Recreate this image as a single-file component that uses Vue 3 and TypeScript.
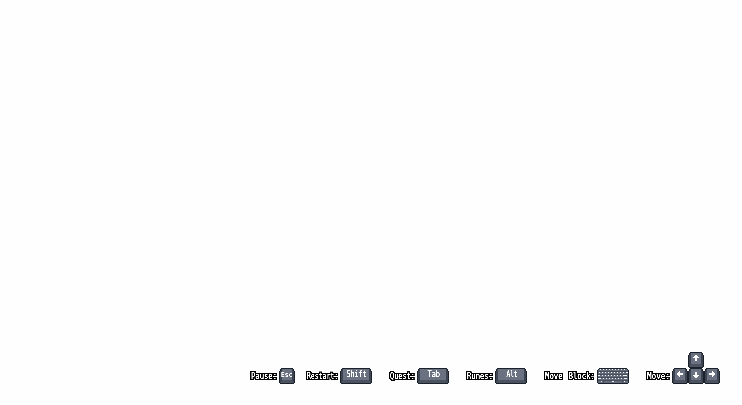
<script setup lang="ts">
interface Hint {
  label: string
  space: number
  key?: string
  wide?: boolean
  keySpan?: number
  keyX?: number
  keyY?: number
  kind: 'key' | 'keyboard' | 'arrows'
}

const hints: Hint[] = [
  { label: 'Pause:', space: 29, key: 'Esc', keySpan: 11.5, keyX: 2, keyY: 9, kind: 'key' },
  { label: 'Restart:', space: 34, key: 'Shift', wide: true, keySpan: 20, keyX: 6.5, keyY: 9, kind: 'key' },
  { label: 'Quest:', space: 28, key: 'Tab', wide: true, keySpan: 12.5, keyX: 10.5, keyY: 9, kind: 'key' },
  { label: 'Runes:', space: 29, key: 'Alt', wide: true, keySpan: 11, keyX: 11.5, keyY: 9, kind: 'key' },
  { label: 'Move Block:', space: 53, kind: 'keyboard' },
  { label: 'Move:', space: 26, kind: 'arrows' },
]

const arrows: { name: string; path: string }[] = [
  { name: 'up', path: 'M7 3h2v1h1v1h1v1H9v3H7V6H5V5h1V4h1z' },
  { name: 'left', path: 'M5 5h1V4h1V3h1v2h3v2H8v2H7V8H6V7H5z' },
  { name: 'down', path: 'M7 4h2v3h2v1h-1v1H9v1H7V9H6V8H5V7h2z' },
  { name: 'right', path: 'M8 3h1v1h1v1h1v2h-1v1H9v1H8V7H5V5h3z' },
]
</script>

<template>
  <main class="screen">
    <svg class="defs" width="0" height="0">
      <filter id="crisp" x="-10%" y="-30%" width="120%" height="160%" color-interpolation-filters="sRGB">
        <feComponentTransfer in="SourceGraphic" result="glyph">
          <feFuncA type="linear" slope="3" intercept="-0.65" />
        </feComponentTransfer>
        <feMorphology in="glyph" operator="dilate" radius="1" result="fat" />
        <feColorMatrix in="fat" type="matrix" values="0 0 0 0 0  0 0 0 0 0  0 0 0 0 0  0 0 0 3 0" result="edge" />
        <feMerge>
          <feMergeNode in="edge" />
          <feMergeNode in="glyph" />
        </feMerge>
      </filter>
      <filter id="sharp" x="-10%" y="-30%" width="120%" height="160%" color-interpolation-filters="sRGB">
        <feComponentTransfer>
          <feFuncA type="linear" slope="2.6" intercept="-0.45" />
        </feComponentTransfer>
      </filter>
    </svg>
    <div class="hints">
      <div v-for="hint in hints" :key="hint.label" class="hint">
        <svg class="label" :width="hint.space" height="16">
          <text class="label-text" x="1" y="11" :textLength="hint.space - 3" lengthAdjust="spacingAndGlyphs">{{ hint.label }}</text>
        </svg>

        <svg v-if="hint.kind === 'key'" class="pixel" :width="hint.wide ? 32 : 16" height="16">
          <path class="rim" :d="hint.wide ? 'M2 0h28v1h1v2h1v12h-1v1H1v-1H0V3h1V1h1z' : 'M2 0h12v1h1v2h1v12h-1v1H1v-1H0V3h1V1h1z'" />
          <path class="side" :d="hint.wide ? 'M2 1h28v2h1v12H1V3h1z' : 'M2 1h12v2h1v12H1V3h1z'" />
          <path class="lip" :d="hint.wide ? 'M3 12h26v1h1v2H2v-2h1z' : 'M3 12h10v1h1v2H2v-2h1z'" />
          <path class="face" :d="hint.wide ? 'M3 1h26v11H3z' : 'M3 1h10v11H3z'" />
          <text class="key-text" :class="{ small: !hint.wide }" :x="hint.keyX" :y="hint.keyY" :textLength="hint.keySpan" lengthAdjust="spacingAndGlyphs">{{ hint.key }}</text>
        </svg>

        <svg v-else-if="hint.kind === 'keyboard'" class="pixel" width="32" height="16">
          <path class="rim" d="M2 0h28v1h1v1h1v13h-1v1H1v-1H0V2h1V1h1z" />
          <path class="deck" d="M2 1h28v1h1v13H1V2h1z" />
          <path class="seam" d="M1 3h30v1H1zM1 6h30v1H1zM1 9h30v1H1zM1 12h30v1H1zM6 13h1v2H6zM25 13h1v2h-1z" />
          <path class="row" d="M3 1.5h27" stroke-dasharray="1 2" />
          <path class="row" d="M2 4.5h29" stroke-dasharray="1 2 1 2 1 2 1 2 1 2 1 2 1 2 1 2 1 2 3" />
          <path class="row" d="M1 7.5h30" stroke-dasharray="2 2 1 2 1 2 1 2 1 2 1 2 1 2 1 2 4" />
          <path class="row" d="M1 10.5h30" stroke-dasharray="3 2 1 2 1 2 1 2 1 2 1 2 1 2 1 2 3" />
          <path class="row" d="M4 13.5h1M15 13.5h2M27 13.5h1" />
        </svg>

        <div v-else class="arrows">
          <svg v-for="arrow in arrows" :key="arrow.name" class="pixel" :class="arrow.name" width="16" height="16">
            <path class="rim" d="M2 0h12v1h1v2h1v12h-1v1H1v-1H0V3h1V1h1z" />
            <path class="side" d="M2 1h12v2h1v12H1V3h1z" />
            <path class="lip" d="M3 12h10v1h1v2H2v-2h1z" />
            <path class="face" d="M3 1h10v11H3z" />
            <path class="ink" :d="arrow.path" />
          </svg>
        </div>
      </div>
    </div>
  </main>
</template>

<style>
body {
  margin: 0;
  background: #fefefe;
}
</style>

<style scoped>
.screen {
  box-sizing: border-box;
  display: flex;
  align-items: flex-end;
  justify-content: flex-end;
  width: 742px;
  height: 405px;
  padding: 0 22px 21px 0;
  overflow: hidden;
}
.defs {
  position: absolute;
}
.hints {
  display: flex;
  align-items: flex-end;
  gap: 17px;
}
.hint {
  display: flex;
  align-items: flex-end;
}
.hint:first-child {
  margin-right: -6px;
}
svg {
  display: block;
  overflow: visible;
}
.label-text {
  font: 8px "DejaVu Sans Mono", monospace;
  word-spacing: 1.5px;
  fill: #fff;
  filter: url(#crisp);
}
.key-text {
  font: 8px "DejaVu Sans Mono", monospace;
  fill: #fff;
  filter: url(#sharp);
}
.key-text.small {
  font-size: 7px;
}
.pixel {
  shape-rendering: crispEdges;
}
.rim {
  fill: #1c222c;
}
.side {
  fill: #3c4452;
}
.lip {
  fill: #4b5361;
}
.face {
  fill: #6a7180;
}
.deck {
  fill: #646b7a;
}
.seam {
  fill: #464e5c;
}
.ink {
  fill: #fff;
}
.row {
  stroke: #f4f5f7;
  stroke-width: 1;
  fill: none;
}
.arrows {
  display: grid;
  grid-template-columns: repeat(3, 16px);
  grid-template-rows: repeat(2, 16px);
}
.up {
  grid-area: 1 / 2;
}
.left {
  grid-area: 2 / 1;
}
.down {
  grid-area: 2 / 2;
}
.right {
  grid-area: 2 / 3;
}
</style>
